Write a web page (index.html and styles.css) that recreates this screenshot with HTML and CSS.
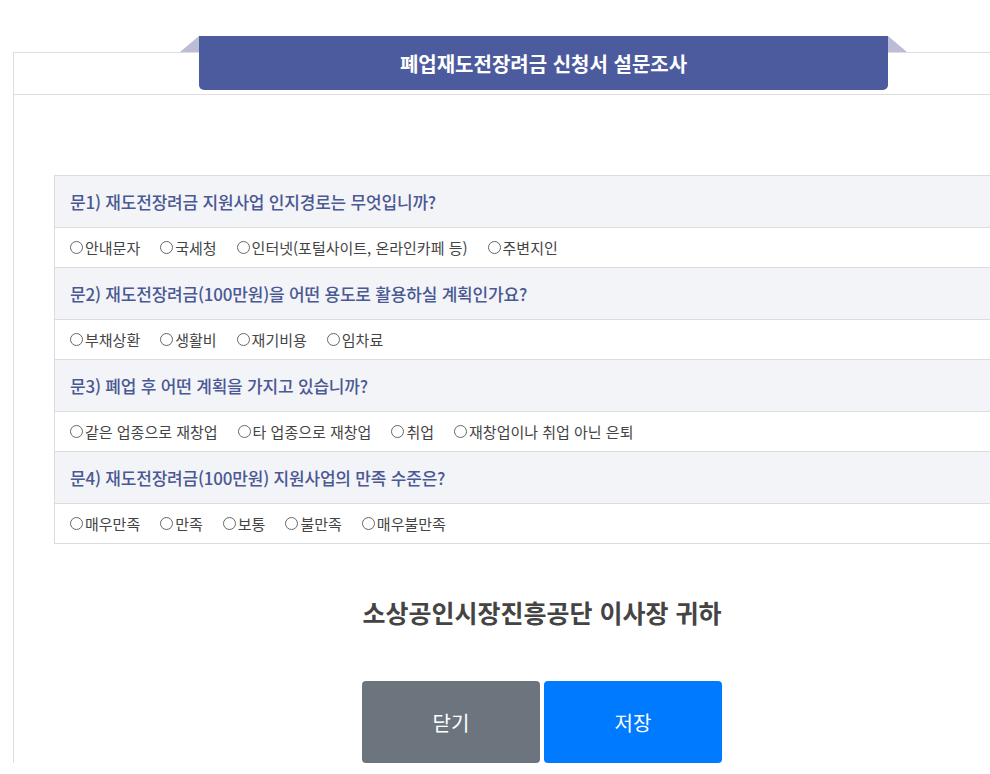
FILE: index.html
```html
<!DOCTYPE html>
<html lang="ko">
<head>
<meta charset="utf-8">
<title>폐업재도전장려금 신청서 설문조사</title>
<link rel="stylesheet" href="styles.css">
</head>
<body>
<div class="page">
  <div class="panel">
    <div class="panel-head">
      <div class="tab">
        <span class="fold fold-left"></span>
        <span class="fold fold-right"></span>
        <h1 class="tab-title">폐업재도전장려금 신청서 설문조사</h1>
      </div>
    </div>
    <div class="panel-body">
      <div class="survey">
        <div class="q">문1) 재도전장려금 지원사업 인지경로는 무엇입니까?</div>
        <div class="a">
          <label class="opt"><span class="radio"></span>안내문자</label>
          <label class="opt"><span class="radio"></span>국세청</label>
          <label class="opt"><span class="radio"></span>인터넷(포털사이트, 온라인카페 등)</label>
          <label class="opt"><span class="radio"></span>주변지인</label>
        </div>
        <div class="q">문2) 재도전장려금(100만원)을 어떤 용도로 활용하실 계획인가요?</div>
        <div class="a">
          <label class="opt"><span class="radio"></span>부채상환</label>
          <label class="opt"><span class="radio"></span>생활비</label>
          <label class="opt"><span class="radio"></span>재기비용</label>
          <label class="opt"><span class="radio"></span>임차료</label>
        </div>
        <div class="q">문3) 폐업 후 어떤 계획을 가지고 있습니까?</div>
        <div class="a">
          <label class="opt"><span class="radio"></span>같은 업종으로 재창업</label>
          <label class="opt"><span class="radio"></span>타 업종으로 재창업</label>
          <label class="opt"><span class="radio"></span>취업</label>
          <label class="opt"><span class="radio"></span>재창업이나 취업 아닌 은퇴</label>
        </div>
        <div class="q">문4) 재도전장려금(100만원) 지원사업의 만족 수준은?</div>
        <div class="a">
          <label class="opt"><span class="radio"></span>매우만족</label>
          <label class="opt"><span class="radio"></span>만족</label>
          <label class="opt"><span class="radio"></span>보통</label>
          <label class="opt"><span class="radio"></span>불만족</label>
          <label class="opt"><span class="radio"></span>매우불만족</label>
        </div>
      </div>
      <p class="sign">소상공인시장진흥공단 이사장 귀하</p>
      <div class="buttons">
        <button class="btn btn-close" type="button">닫기</button>
        <button class="btn btn-save" type="button">저장</button>
      </div>
    </div>
  </div>
</div>
</body>
</html>
```

FILE: styles.css
```css
html, body {
  margin: 0;
  padding: 0;
  overflow: hidden;
  background: #ffffff;
}

body {
  font-family: "Noto Sans CJK KR", "Noto Sans", sans-serif;
  color: #444;
}

.page {
  padding-top: 52px;
  padding-left: 13px;
}

.panel {
  width: 1058px;
  box-sizing: border-box;
  border: 1px solid #dedede;
  border-bottom: none;
}

.panel-head {
  position: relative;
  height: 41px;
  border-bottom: 1px solid #dedede;
}

.tab {
  position: absolute;
  top: -17px;
  left: 185px;
  width: 689px;
  height: 54px;
  background: #4b5b9e;
  border-radius: 0 0 5px 5px;
  display: flex;
  align-items: center;
  justify-content: center;
}

.fold {
  position: absolute;
  top: 0;
  width: 0;
  height: 0;
  border-bottom: 16px solid #bbbdd7;
}

.fold-left {
  left: -19px;
  border-left: 19px solid transparent;
}

.fold-right {
  right: -19px;
  border-right: 19px solid transparent;
}

.tab-title {
  margin: 0;
  color: #ffffff;
  font-size: 20px;
  font-weight: 700;
  letter-spacing: 0;
}

.panel-body {
  padding: 80px 40px 0 40px;
}

.survey {
  border: 1px solid #dcdcdc;
  border-right: none;
}

.q {
  height: 52px;
  box-sizing: border-box;
  display: flex;
  align-items: center;
  padding-left: 15px;
  background: #f3f4f8;
  border-bottom: 1px solid #dcdcdc;
  color: #4a5893;
  font-size: 17px;
  letter-spacing: -0.2px;
  font-weight: 500;
}

.a {
  height: 40px;
  box-sizing: border-box;
  display: flex;
  align-items: center;
  gap: 20px;
  padding-left: 15px;
  border-bottom: 1px solid #dcdcdc;
  font-size: 15px;
  color: #444;
}

.a:last-child {
  height: 39px;
  border-bottom: none;
}

.opt {
  display: flex;
  align-items: center;
}

.radio {
  display: inline-block;
  width: 11px;
  height: 11px;
  border: 1px solid #666;
  border-radius: 50%;
  background: #fff;
  margin-right: 2px;
}

.sign {
  margin: 50px 0 0 0;
  text-align: center;
  font-size: 25px;
  line-height: 36px;
  font-weight: 700;
  color: #444;
}

.buttons {
  margin-top: 51px;
  display: flex;
  justify-content: center;
  gap: 4px;
}

.btn {
  width: 178px;
  height: 82px;
  border: none;
  border-radius: 4px;
  color: #ffffff;
  font-family: "Noto Sans CJK KR", "Noto Sans", sans-serif;
  font-size: 20px;
  font-weight: 400;
}

.btn-close {
  background: #6c757d;
}

.btn-save {
  background: #007bff;
}
```
